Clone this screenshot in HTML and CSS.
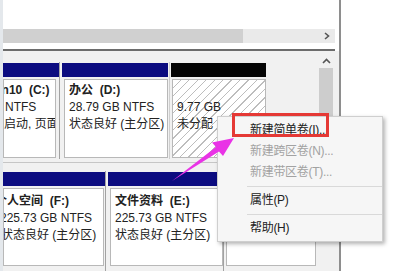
FILE: index.html
```html
<!DOCTYPE html>
<html lang="zh-CN">
<head>
    <meta charset="UTF-8">
    <title>磁盘管理</title>
    <link rel="stylesheet" href="styles.css">
</head>
<body>
<div class="screen">
    <div class="edge"></div>

    <div class="console">
        <div class="list-view"></div>

        <!-- horizontal scrollbar of the volume list -->
        <div class="hscroll">
            <div class="hthumb"></div>
            <svg class="chev-right" width="6" height="8" viewBox="0 0 6 8"><polyline points="1,1 4.5,4 1,7" fill="none" stroke="#555" stroke-width="1.6"/></svg>
        </div>
        <div class="rule"></div>

        <div class="disk-view">
            <div class="disks">
                <div class="disk-row row-1">
                    <div class="part part-c">
                        <div class="bar primary"></div>
                        <div class="body">
                            <div class="name shift-c1">Win10&nbsp;&nbsp;(C:)</div>
                            <div class="shift-c2">97.66 GB NTFS</div>
                            <div>启动, 页面文件, 故障转储</div>
                        </div>
                    </div>
                    <div class="sep"></div>
                    <div class="part part-d">
                        <div class="bar primary"></div>
                        <div class="body">
                            <div class="name">办公&nbsp;&nbsp;(D:)</div>
                            <div>28.79 GB NTFS</div>
                            <div>状态良好 (主分区)</div>
                        </div>
                    </div>
                    <div class="sep light"></div>
                    <div class="part part-free">
                        <div class="bar unalloc"></div>
                        <div class="body hatch">
                            <div>&nbsp;</div>
                            <div>9.77 GB</div>
                            <div>未分配</div>
                        </div>
                    </div>
                </div>

                <div class="disk-row row-2">
                    <div class="part part-f">
                        <div class="bar primary"></div>
                        <div class="body">
                            <div class="name shift-f1">个人空间&nbsp;&nbsp;(F:)</div>
                            <div class="shift-f2">225.73 GB NTFS</div>
                            <div class="shift-f3">状态良好 (主分区)</div>
                        </div>
                    </div>
                    <div class="sep"></div>
                    <div class="part part-e">
                        <div class="bar primary"></div>
                        <div class="body">
                            <div class="name">文件资料&nbsp;&nbsp;(E:)</div>
                            <div>225.73 GB NTFS</div>
                            <div>状态良好 (主分区)</div>
                        </div>
                    </div>
                    <div class="sep"></div>
                    <div class="part part-next">
                        <div class="bar primary"></div>
                        <div class="body"></div>
                    </div>
                </div>
            </div>

            <!-- vertical scrollbar of the disk view -->
            <div class="vscroll">
                <svg width="9" height="6" viewBox="0 0 9 6"><polyline points="1,5 4.5,1.5 8,5" fill="none" stroke="#555" stroke-width="1.6"/></svg>
                <div class="vthumb"></div>
            </div>
        </div>
    </div>

    <!-- context menu on the unallocated space -->
    <div class="menu">
        <div class="item">新建简单卷(I)...</div>
        <div class="item off">新建跨区卷(N)...</div>
        <div class="item off">新建带区卷(T)...</div>
        <div class="menu-sep"></div>
        <div class="item">属性(P)</div>
        <div class="menu-sep"></div>
        <div class="item">帮助(H)</div>
    </div>

    <!-- annotation -->
    <div class="callout"></div>
    <svg class="pointer" width="398" height="271" viewBox="0 0 398 271">
        <polygon points="172,181 216,147 212,142.5 234,138 223,156 219,151.5" fill="#e933e6"/>
    </svg>
</div>
</body>
</html>
```

FILE: styles.css
```css
* {
    box-sizing: border-box;
}

body {
    margin: 0;
    width: 398px;
    height: 271px;
    overflow: hidden;
    background-color: #ffffff;
    font-family: "Liberation Sans", "Noto Sans CJK SC", sans-serif;
    font-size: 12px;
    color: #222222;
}

.screen {
    position: relative;
    display: flex;
    width: 398px;
    height: 271px;
    overflow: hidden;
}

.edge {
    width: 3px;
    background-color: #e4e8ec;
}

.console {
    width: 338px;
    display: flex;
    flex-direction: column;
    border-right: 2px solid #8e8e8e;
}

.list-view {
    height: 29px;
}

/* Scrollbars */
.hscroll {
    height: 14px;
    width: 332px;
    display: flex;
    align-items: center;
    background-color: #eaeaea;
}

.hthumb {
    width: 240px;
    height: 100%;
    background-color: #d0d0d0;
}

.chev-right {
    margin-left: auto;
    margin-right: 5px;
}

.rule {
    width: 332px;
    height: 8px;
    border-bottom: 2px solid #6c6c6c;
}

.vscroll {
    width: 18px;
    display: flex;
    flex-direction: column;
    align-items: center;
    padding-top: 7px;
}

.vthumb {
    width: 14px;
    height: 172px;
    margin-top: 4px;
    background-color: #cdcdcd;
}

/* Disk view */
.disk-view {
    flex: 1;
    display: flex;
    background-color: #f1f1f1;
}

.disks {
    width: 314px;
    padding-top: 11px;
}

.disk-row {
    display: flex;
}

.row-1 {
    padding-bottom: 3px;
    border-bottom: 1px solid #c6c6c6;
}

.row-1 .part {
    height: 97px;
}

.row-2 {
    margin-top: 8px;
}

.row-2 .part {
    height: 100px;
}

.part {
    display: flex;
    flex-direction: column;
    padding-top: 1px;
}

.bar {
    height: 14px;
}

.primary {
    background-color: #0c0c80;
}

.unalloc {
    background-color: #050505;
}

.body {
    flex: 1;
    margin: 2px 0 1px 2px;
    padding: 2px 4px 0;
    border: 1px solid #b8b8b8;
    background-color: #ffffff;
    line-height: 17px;
    white-space: nowrap;
    overflow: hidden;
}

.row-2 .body {
    padding-top: 4px;
    margin-bottom: 5px;
}

.hatch {
    background: repeating-linear-gradient(135deg, #ffffff 0 5px, #bdbdbd 5px 6px);
}

.name {
    font-weight: bold;
}

.sep {
    width: 1px;
    margin-right: 2px;
    background-color: #a2a2a2;
}

.sep.light {
    background-color: #cfcfcf;
    margin-left: 1px;
    margin-right: 1px;
}

.part-c {
    width: 56px;
}

.part-c .body {
    margin-left: 0;
    margin-right: 3px;
    padding-left: 0;
}

.shift-c1 {
    margin-left: -17px;
}

.shift-c2 {
    margin-left: -53px;
}

.part-d {
    width: 106px;
}

.part-free {
    width: 95px;
}

.part-free .body {
    margin-left: 1px;
}

.part-f {
    width: 102px;
}

.part-f .body {
    margin-left: 0;
    margin-right: 1px;
    padding-left: 0;
}

.shift-f1 {
    margin-left: -9px;
}

.shift-f2 {
    margin-left: -4px;
}

.shift-f3 {
    margin-left: -3px;
}

.part-e {
    width: 115px;
}

.part-next {
    width: 91px;
}

.part-next .body {
    margin-left: 0;
    margin-right: 1px;
}

/* Context menu */
.menu {
    position: absolute;
    left: 217px;
    top: 116px;
    width: 166px;
    padding: 3px 0 2px;
    background-color: #f6f6f6;
    border: 1px solid #cfcfcf;
    box-shadow: 2px 2px 4px rgba(0, 0, 0, 0.3);
}

.item {
    height: 21px;
    line-height: 21px;
    padding-left: 32px;
    letter-spacing: -0.3px;
    color: #222222;
}

.item.off {
    color: #a2a2a2;
}

.menu-sep {
    height: 1px;
    margin: 3px 0 3px 29px;
    background-color: #d9d9d9;
}

/* Annotation */
.callout {
    position: absolute;
    left: 232px;
    top: 113px;
    width: 97px;
    height: 24px;
    border: 3px solid #e53935;
}

.pointer {
    position: absolute;
    left: 0;
    top: 0;
    pointer-events: none;
}
```
